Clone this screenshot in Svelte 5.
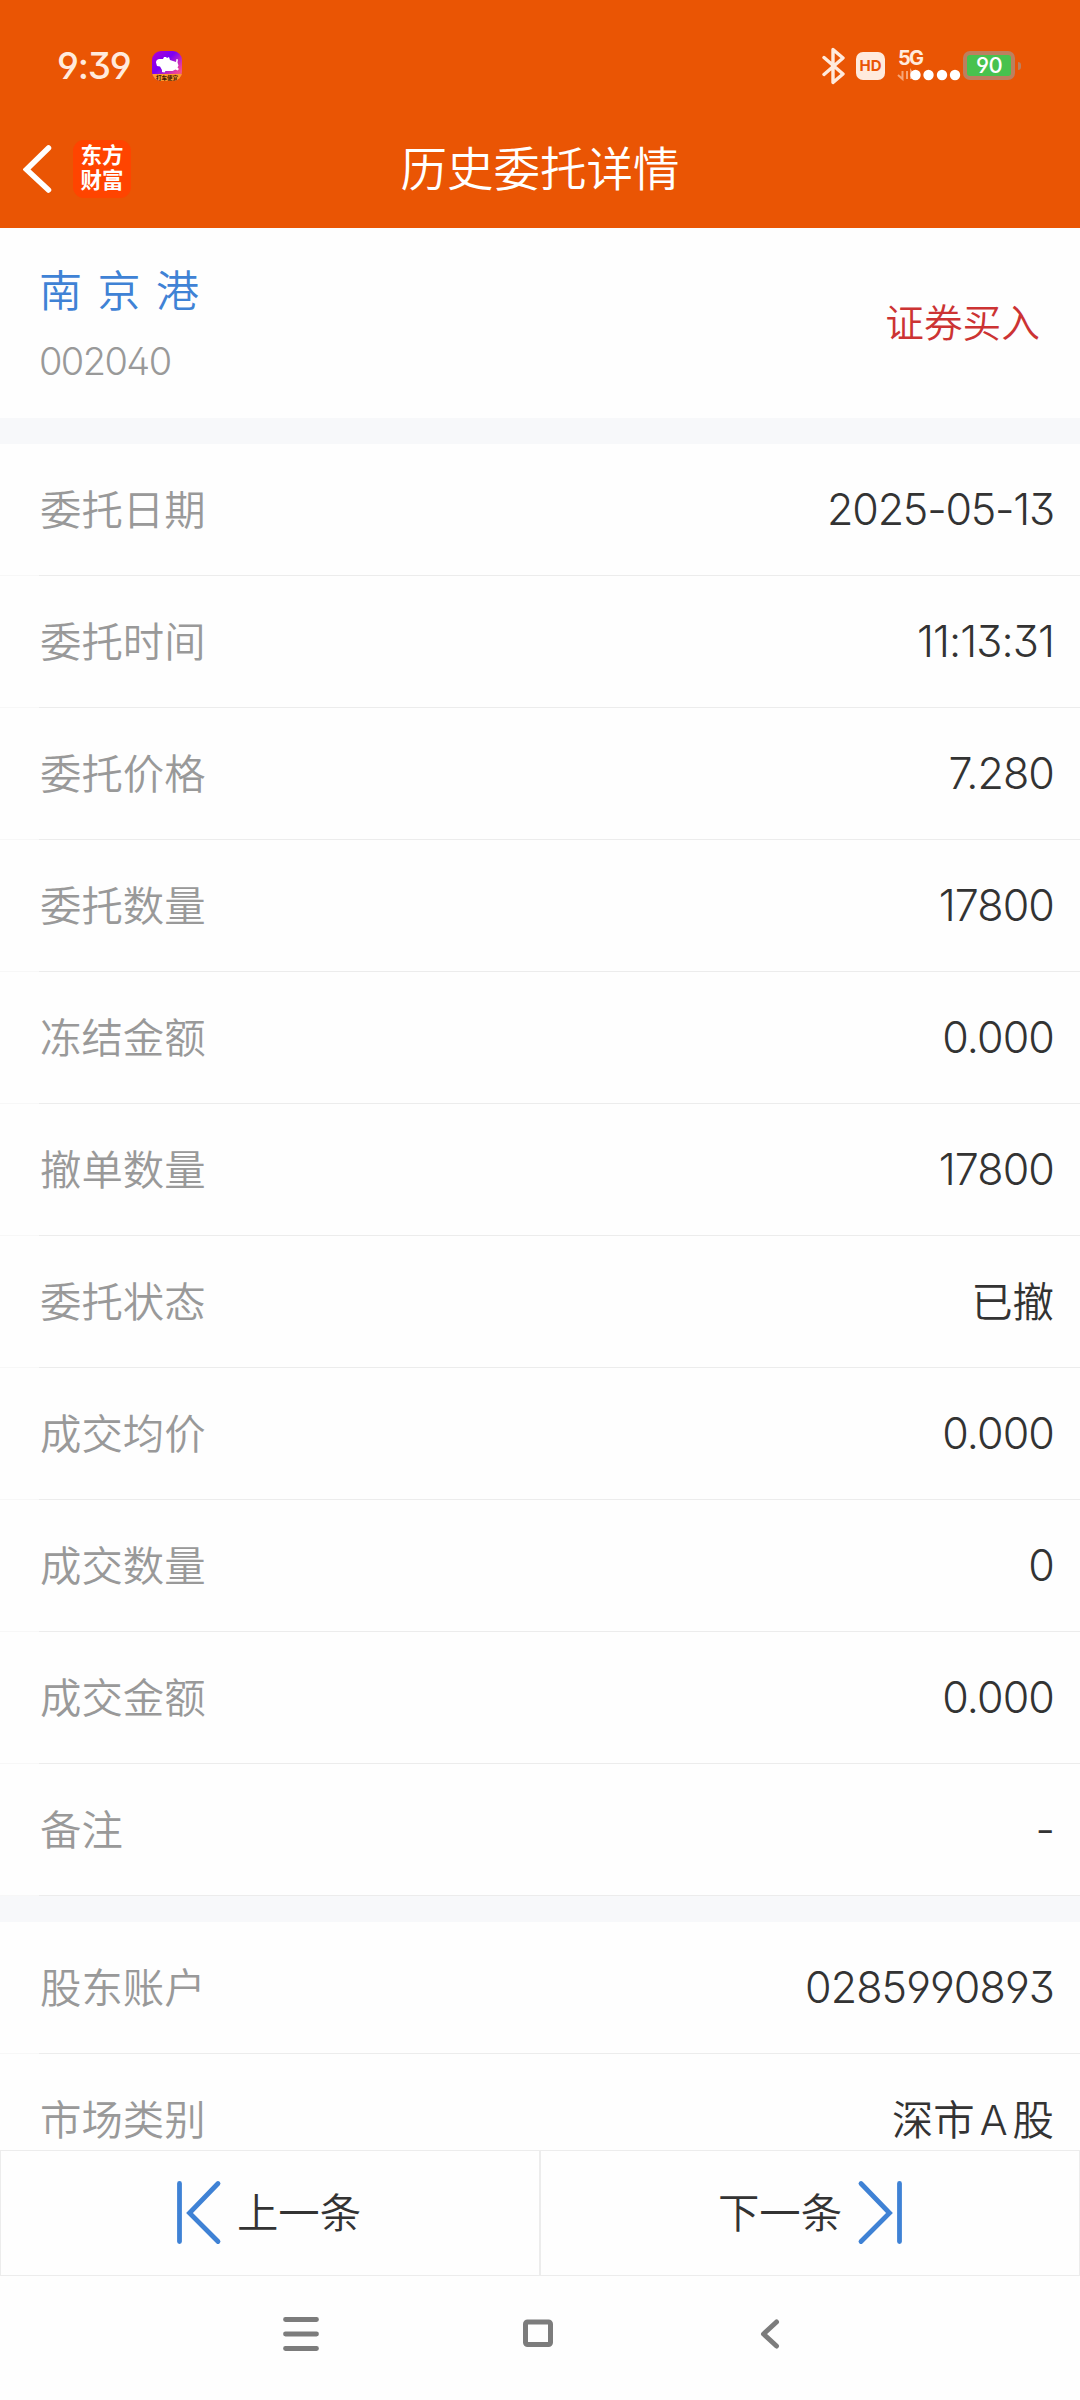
<script>
  const orderRows = [
    { label: '委托日期', value: '2025-05-13', kind: 'date' },
    { label: '委托时间', value: '11:13:31' },
    { label: '委托价格', value: '7.280' },
    { label: '委托数量', value: '17800' },
    { label: '冻结金额', value: '0.000' },
    { label: '撤单数量', value: '17800' },
    { label: '委托状态', value: '已撤', kind: 'cjk' },
    { label: '成交均价', value: '0.000' },
    { label: '成交数量', value: '0' },
    { label: '成交金额', value: '0.000' },
    { label: '备注', value: '-' }
  ];
  const accountRows = [
    { label: '股东账户', value: '0285990893' },
    { label: '市场类别', value: '深市A股', kind: 'cjk' }
  ];
  // Latin capitals inside Chinese values get a little air on both sides.
  const split = (text) => text.split(/([A-Z]+)/).filter(Boolean);
</script>

{#snippet row(item)}
  <div class="row">
    <span class="label">{item.label}</span>
    <span class="value {item.kind ?? ''}">{#each split(item.value) as part}<span class:latin={/[A-Z]/.test(part)}>{part}</span>{/each}</span>
  </div>
{/snippet}

<div class="screen">
  <header>
    <div class="status">
      <span class="time">9:39</span>
      <svg class="app" width="30" height="30" viewBox="0 0 30 30">
        <defs>
          <linearGradient id="appBg" x1="0" y1="0" x2="1" y2="1">
            <stop offset="0" stop-color="#b400d0" />
            <stop offset=".4" stop-color="#7a00f5" />
            <stop offset=".75" stop-color="#e83fa0" />
            <stop offset="1" stop-color="#ff7a5c" />
          </linearGradient>
          <clipPath id="appClip"><rect width="30" height="30" rx="9" /></clipPath>
        </defs>
        <g clip-path="url(#appClip)">
          <rect width="30" height="30" fill="url(#appBg)" />
          <rect y="23" width="30" height="7" fill="#ff9b2e" />
          <path d="M4 11.500Q4 8.500 7 8l4 0 1-2 2 0 1 1 2-1 1 3 6 2 .500-3 1.500 .500-.500 3 1 3-1 2 1.500 1.500-1.500 1.500-2-1-3 1.500h-7l-1 1.500-2.500-.500v-2l-2-3.500-3-.500z" fill="#fff" />
          <text x="15" y="28.600" font-size="5.500" text-anchor="middle" fill="#3a1500" font-weight="700">打车便宜</text>
        </g>
      </svg>
      <div class="indicators">
        <svg width="24" height="38" viewBox="0 0 24 38">
          <path d="M2 10.500 21 27 11 35.500V2.500L21 11 2 27.500" fill="none" stroke="#ffeadd" stroke-width="3.400" stroke-linejoin="round" stroke-linecap="round" />
        </svg>
        <span class="hd">HD</span>
        <svg class="signal" width="65" height="34" viewBox="0 0 65 34">
          <text x="0" y="15.500" font-size="20" font-weight="700" fill="#ffeadd" textLength="26">5G</text>
          <path d="M4.500 22v8L0 26M9 22v8M13 30v-8l5 7" fill="none" stroke="#f7a577" stroke-width="2" />
          <g fill="#fff"><circle cx="17.500" cy="26" r="5.200" /><circle cx="30.500" cy="26" r="5.200" /><circle cx="44" cy="26" r="5.200" /><circle cx="57" cy="26" r="5.200" /></g>
        </svg>
        <span class="battery">90</span>
        <i class="cap"></i>
      </div>
    </div>
    <div class="nav">
      <svg class="back" width="30" height="50" viewBox="0 0 30 50">
        <path d="M25.500 4 3.500 25.500 25.500 46" fill="none" stroke="#fff" stroke-width="5.500" stroke-linecap="round" />
      </svg>
      <div class="brand"><span>东方</span><span>财富</span></div>
      <h1>历史委托详情</h1>
    </div>
  </header>

  <section class="stock">
    <div>
      <div class="name"><span>南</span><span>京</span><span>港</span></div>
      <div class="code">002040</div>
    </div>
    <div class="side">证券买入</div>
  </section>

  <main>
    <section class="group">
      {#each orderRows as item}{@render row(item)}{/each}
    </section>
    <section class="group">
      {#each accountRows as item}{@render row(item)}{/each}
    </section>
  </main>

  <div class="pager">
    <button class="prev">
      <svg width="46" height="66" viewBox="0 0 46 66">
        <path d="M3.500 3.500v58M42 3.500 13.500 33 42 61.500" fill="none" stroke="#3f82d5" stroke-width="4.800" stroke-linecap="round" />
      </svg>
      <span>上一条</span>
    </button>
    <button class="next">
      <span>下一条</span>
      <svg width="46" height="66" viewBox="0 0 46 66">
        <path d="M42.500 3.500v58M4 3.500 32.500 33 4 61.500" fill="none" stroke="#3f82d5" stroke-width="4.800" stroke-linecap="round" />
      </svg>
    </button>
  </div>

  <nav class="system">
    <svg width="38" height="38" viewBox="0 0 38 38">
      <path d="M3.500 4.500h31M3.500 19h31M3.500 33.500h31" fill="none" stroke="#7c7c7c" stroke-width="4.800" stroke-linecap="round" />
    </svg>
    <svg width="30" height="30" viewBox="0 0 30 30">
      <rect x="2.500" y="3" width="25" height="22.500" rx="2" fill="none" stroke="#7c7c7c" stroke-width="5" />
    </svg>
    <svg width="20" height="32" viewBox="0 0 20 32">
      <path d="M16.500 4 3.500 16 16.500 28" fill="none" stroke="#7c7c7c" stroke-width="5" stroke-linecap="round" stroke-linejoin="round" />
    </svg>
  </nav>
</div>

<style>
  :global(body) { margin: 0; background: #fefefe; }
  .screen {
    width: 1080px;
    height: 2400px;
    display: flex;
    flex-direction: column;
    overflow: hidden;
    background: #fefefe;
    color: #333;
    font-family: Inter, 'Noto Sans CJK SC', sans-serif;
    font-feature-settings: 'cv09', 'ss01';
    font-weight: 350;
    box-sizing: border-box;
  }
  header { height: 228px; flex: none; background: #ea5504; color: #fff; }
  .status { height: 110px; display: flex; align-items: center; padding: 21px 0 0 57px; box-sizing: border-box; }
  .time { width: 95px; font-size: 37px; font-weight: 550; line-height: 44px; letter-spacing: -1.200px; color: #ffeadd; }
  .indicators { display: flex; align-items: center; margin-left: 640px; }
  .hd { width: 29px; height: 28px; margin-left: 10px; border-radius: 7px; background: #ffeadd; color: #ea5504; font-size: 15px; font-weight: 700; line-height: 28px; text-align: center; }
  .signal { margin-left: 13px; overflow: visible; }
  .battery { box-sizing: border-box; width: 52px; height: 29px; border: 4px solid #bd7f5f; border-radius: 7px; background: #48c24e; color: #fff; font-size: 22px; font-weight: 500; line-height: 21px; letter-spacing: -.5px; text-align: center; }
  .cap { width: 3px; height: 8px; margin-left: 3px; border-radius: 0 4px 4px 0; background: #bd7f5f; }
  .nav { height: 118px; display: grid; grid-template-columns: 50px 60px 1fr 133px; align-items: center; padding-left: 23px; box-sizing: border-box; }
  .brand { width: 58px; height: 58px; border-radius: 11px; background: #ff4400; display: flex; flex-direction: column; justify-content: center; padding-bottom: 3px; box-sizing: border-box; font-size: 21.500px; font-weight: 700; line-height: 25px; text-align: center; }
  h1 { margin: 0; font-size: 46.500px; font-weight: 350; line-height: 60px; text-align: center; }
  .stock { height: 190px; flex: none; display: flex; justify-content: space-between; align-items: center; padding: 0 40px 0 39px; box-sizing: border-box; }
  .name { display: flex; gap: 15.500px; padding-top: 6px; color: #3f82d5; font-size: 43px; line-height: 60px; }
  .code { margin-top: 10px; color: #999; font-size: 38px; line-height: 60px; letter-spacing: -1.600px; }
  .side { padding-bottom: 6px; color: #cc3333; font-size: 38.700px; }
  main { flex: none; height: 1732px; overflow: hidden; }
  .group { border-top: 26px solid #f7f8fa; }
  .row {
    height: 132px;
    display: flex;
    justify-content: space-between;
    align-items: center;
    padding: 0 26px 0 40px;
    box-sizing: border-box;
    background: linear-gradient(to right, #f7f7f7 39px, #ececec 39px) bottom / 100% 1px no-repeat;
  }
  .label { padding-bottom: 7px; color: #999; font-size: 41.400px; }
  .value { padding-bottom: 2px; font-size: 43px; letter-spacing: -.9px; }
  .value.date { letter-spacing: -1.200px; }
  .value.cjk { padding-bottom: 7px; font-size: 41.400px; letter-spacing: 0; }
  .latin { padding: 0 5px; }
  .pager { flex: none; height: 126px; display: grid; grid-template-columns: 1fr 1fr; }
  button { appearance: none; border: 1px solid #ececec; background: transparent; padding: 0; display: flex; align-items: center; justify-content: center; gap: 15px; color: #333; font: inherit; font-size: 41.400px; }
  button span { padding-bottom: 6px; }
  .prev { padding-right: 3px; }
  .next { padding-left: 1px; }
  .system { height: 116px; display: grid; grid-template-columns: 241px 237px 20px; align-items: center; padding-left: 282px; }
</style>
